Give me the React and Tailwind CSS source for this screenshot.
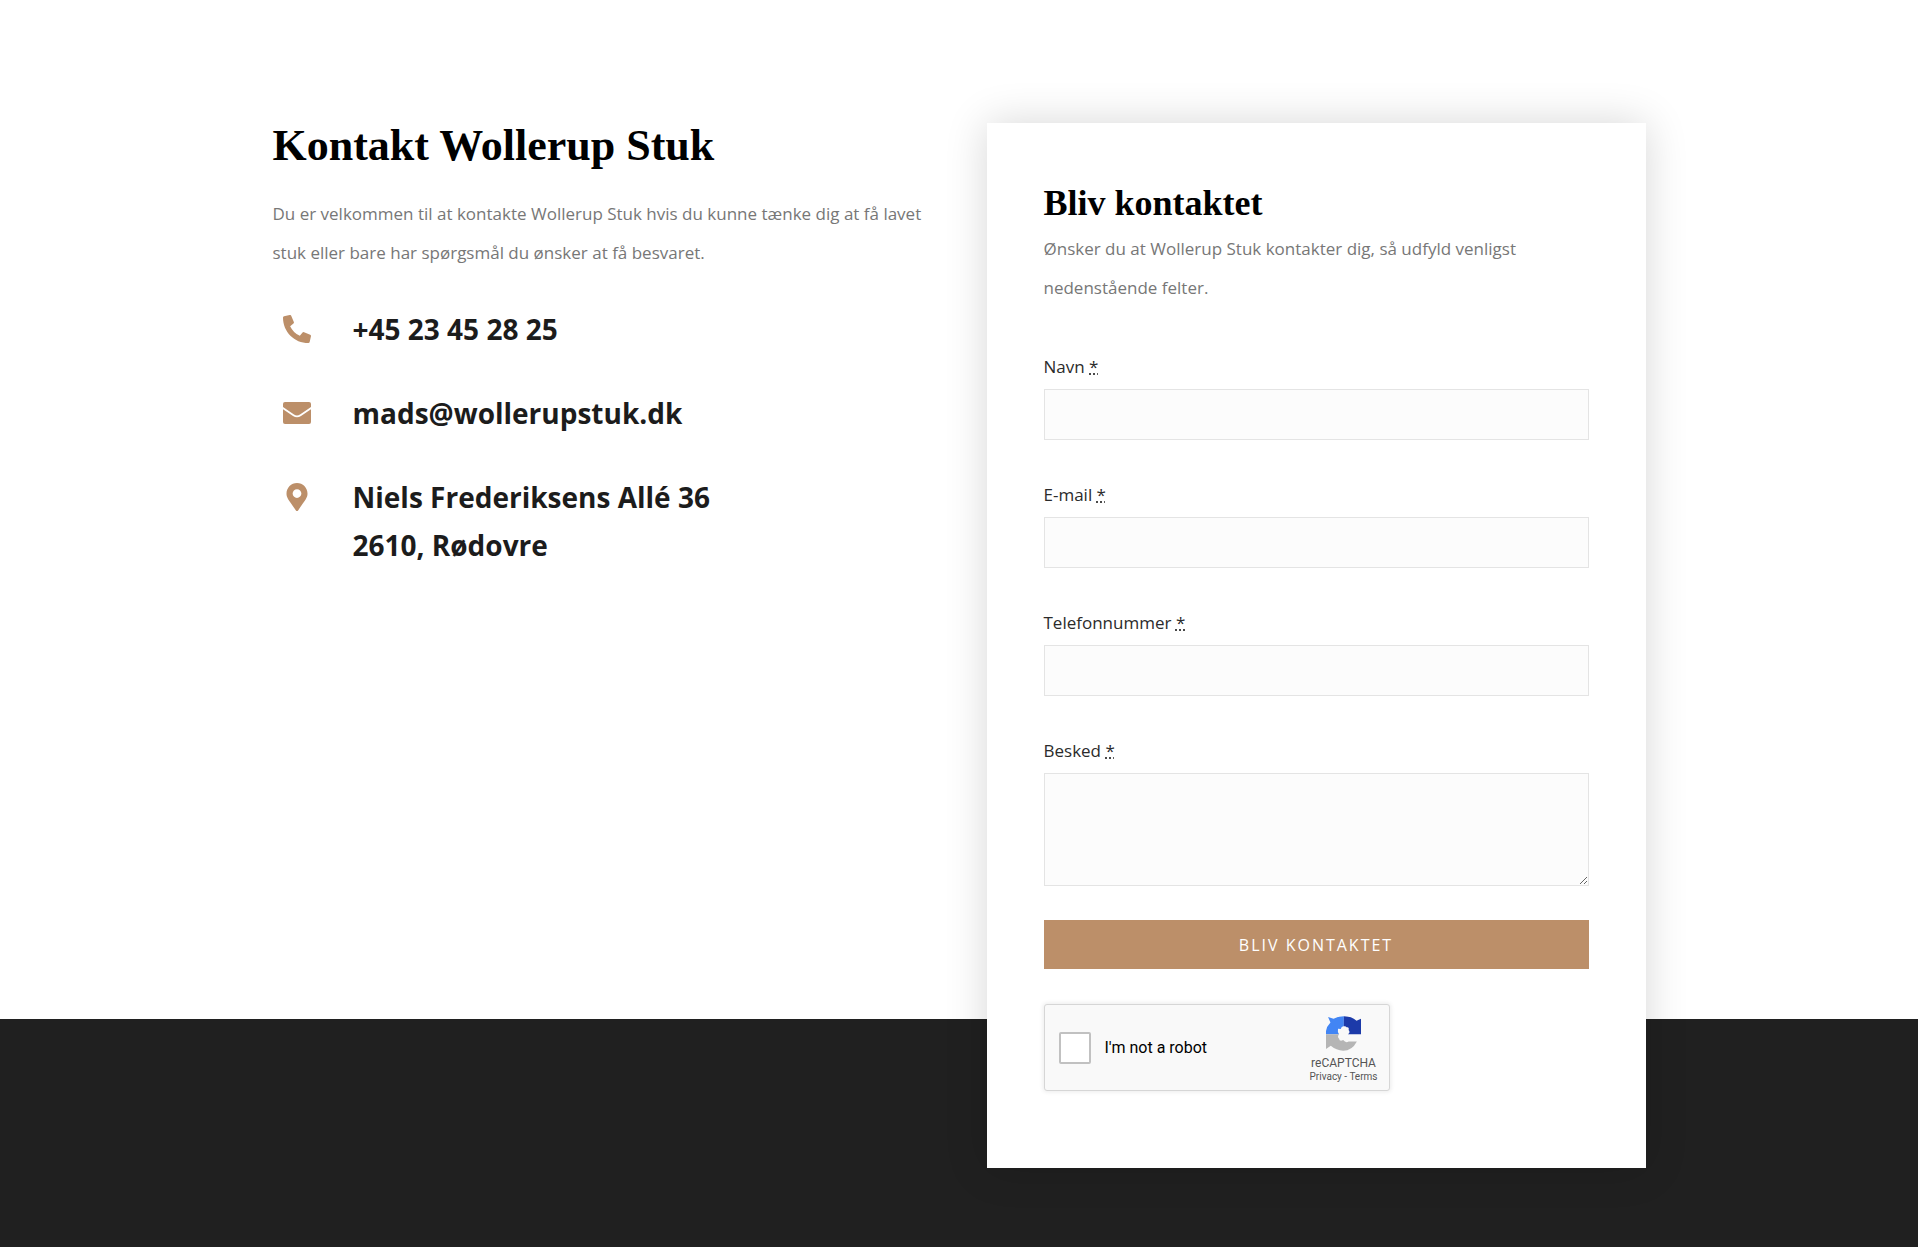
import { FaMapMarkerAlt, FaPhoneAlt } from "react-icons/fa";

const EnvelopeIcon = ({ size }) => (
  <svg viewBox="0 0 28 28" width={size} height={size} aria-hidden="true">
    <rect x="0" y="3" width="28" height="22" rx="2" fill="currentColor" />
    <path
      d="M-1 8.5 L10.5 16.2 Q14 18.6 17.5 16.2 L29 8.5"
      fill="none"
      stroke="#fff"
      strokeWidth="1.8"
    />
  </svg>
);

const contactItems = [
  { icon: FaPhoneAlt, lines: ["+45 23 45 28 25"], href: "tel:+4523452825" },
  { icon: EnvelopeIcon, lines: ["mads@wollerupstuk.dk"], href: "mailto:mads@wollerupstuk.dk" },
  { icon: FaMapMarkerAlt, lines: ["Niels Frederiksens Allé 36", "2610, Rødovre"] },
];

const fields = [
  { id: "navn", label: "Navn", type: "text" },
  { id: "email", label: "E-mail", type: "email" },
  { id: "telefon", label: "Telefonnummer", type: "tel" },
];

const ContactItem = ({ icon: Icon, lines, href }) => {
  const text = lines.map((line) => (
    <span key={line} className="block">
      {line}
    </span>
  ));

  return (
    <li className="flex">
      <span className="flex h-12 w-12 shrink-0 items-center justify-center text-[#bc8f69]">
        <Icon size={28} />
      </span>
      <div className="ml-8 text-[28px] leading-12 font-bold text-[#1c1c1c]">
        {href ? <a href={href}>{text}</a> : text}
      </div>
    </li>
  );
};

const FieldLabel = ({ id, children }) => (
  <label htmlFor={id} className="mb-2 block text-[17px] leading-7 text-[#2b2b2b]">
    {children}{" "}
    <abbr title="required" className="underline decoration-dotted">
      *
    </abbr>
  </label>
);

const RecaptchaLogo = () => (
  <svg viewBox="0 0 102 102" className="h-[35px] w-[35px]" aria-hidden="true">
    <path
      fill="#4285f4"
      d="M6 3 L22 8 Q36 1 52 1 V30 Q45 29 43 38 L35 37 Q33 46 38 53 H0 V44 Q2 30 13 19 Z"
    />
    <path
      fill="#1c3aa9"
      d="M52 1 Q74 1 89 14 L102 8 V53 H64 Q72 48 66 41 Q68 31 60 33 Q58 29 52 30 Z"
    />
    <path
      fill="#b5b5b5"
      d="M0 53 H38 Q32 60 38 66 Q40 76 50 70 Q58 80 66 74 H90 Q76 101 50 101 Q30 101 14 87 L0 96 Z"
    />
  </svg>
);

const Recaptcha = () => (
  <div className="flex h-[87px] w-[346px] items-center rounded-[3px] border border-[#d6d6d6] bg-[#f9f9f9] pr-[11px] pl-[14px] shadow-[0_0_4px_1px_rgba(0,0,0,0.08)]">
    <input
      type="checkbox"
      id="robot"
      className="h-8 w-8 appearance-none rounded-[2px] border-2 border-[#c1c1c1] bg-white"
    />
    <label htmlFor="robot" className="ml-[14px] font-[Roboto] text-base text-black">
      I'm not a robot
    </label>
    <div className="ml-auto flex flex-col items-center pt-1 font-[Roboto] text-[#555]">
      <RecaptchaLogo />
      <span className="mt-1 text-xs leading-4">reCAPTCHA</span>
      <span className="text-[10px] leading-3">
        <a href="#privacy">Privacy</a> - <a href="#terms">Terms</a>
      </span>
    </div>
  </div>
);

const ContactForm = () => (
  <form className="-mb-[149px] bg-white px-[57px] pt-14 pb-[77px] shadow-[0_0_40px_rgba(0,0,0,0.16)]">
    <h2 className="mb-[2px] font-['Liberation_Serif',serif] text-[36px] leading-12 font-bold text-black">
      Bliv kontaktet
    </h2>
    <p className="text-[17px] leading-[39px] text-[#777]">
      Ønsker du at Wollerup Stuk kontakter dig, så udfyld venligst nedenstående felter.
    </p>

    <div className="mt-[46px] space-y-[41px]">
      {fields.map((field) => (
        <div key={field.id}>
          <FieldLabel id={field.id}>{field.label}</FieldLabel>
          <input
            id={field.id}
            type={field.type}
            className="block h-[51px] w-full border border-[#e4e4e4] bg-[#fcfcfc] px-4"
          />
        </div>
      ))}
      <div>
        <FieldLabel id="besked">Besked</FieldLabel>
        <textarea
          id="besked"
          className="block h-[113px] w-full resize-y border border-[#e4e4e4] bg-[#fcfcfc] p-4"
        />
      </div>
    </div>

    <button
      type="submit"
      className="mt-[34px] mb-[35px] block h-[49px] w-full bg-[#bc8f69] text-base font-medium tracking-[2px] text-white uppercase"
    >
      Bliv kontaktet
    </button>
    <Recaptcha />
  </form>
);

const App = () => (
  <div className="bg-white pr-[3px] font-['Open_Sans',sans-serif]">
    <main className="relative mx-auto grid max-w-[1373px] grid-cols-2 gap-[55px] pt-[123px]">
      <section>
        <h1 className="font-['Liberation_Serif',serif] text-[44px] leading-[46px] font-bold text-black">
          Kontakt Wollerup Stuk
        </h1>
        <p className="mt-[25px] text-[17px] leading-[39px] text-[#777]">
          Du er velkommen til at kontakte Wollerup Stuk hvis du kunne tænke dig at få lavet stuk
          eller bare har spørgsmål du ønsker at få besvaret.
        </p>
        <ul className="mt-[33px] space-y-9">
          {contactItems.map((item) => (
            <ContactItem key={item.lines[0]} {...item} />
          ))}
        </ul>
      </section>
      <ContactForm />
    </main>
    <footer className="h-[228px] bg-[#202020]" />
  </div>
);

export default App;
